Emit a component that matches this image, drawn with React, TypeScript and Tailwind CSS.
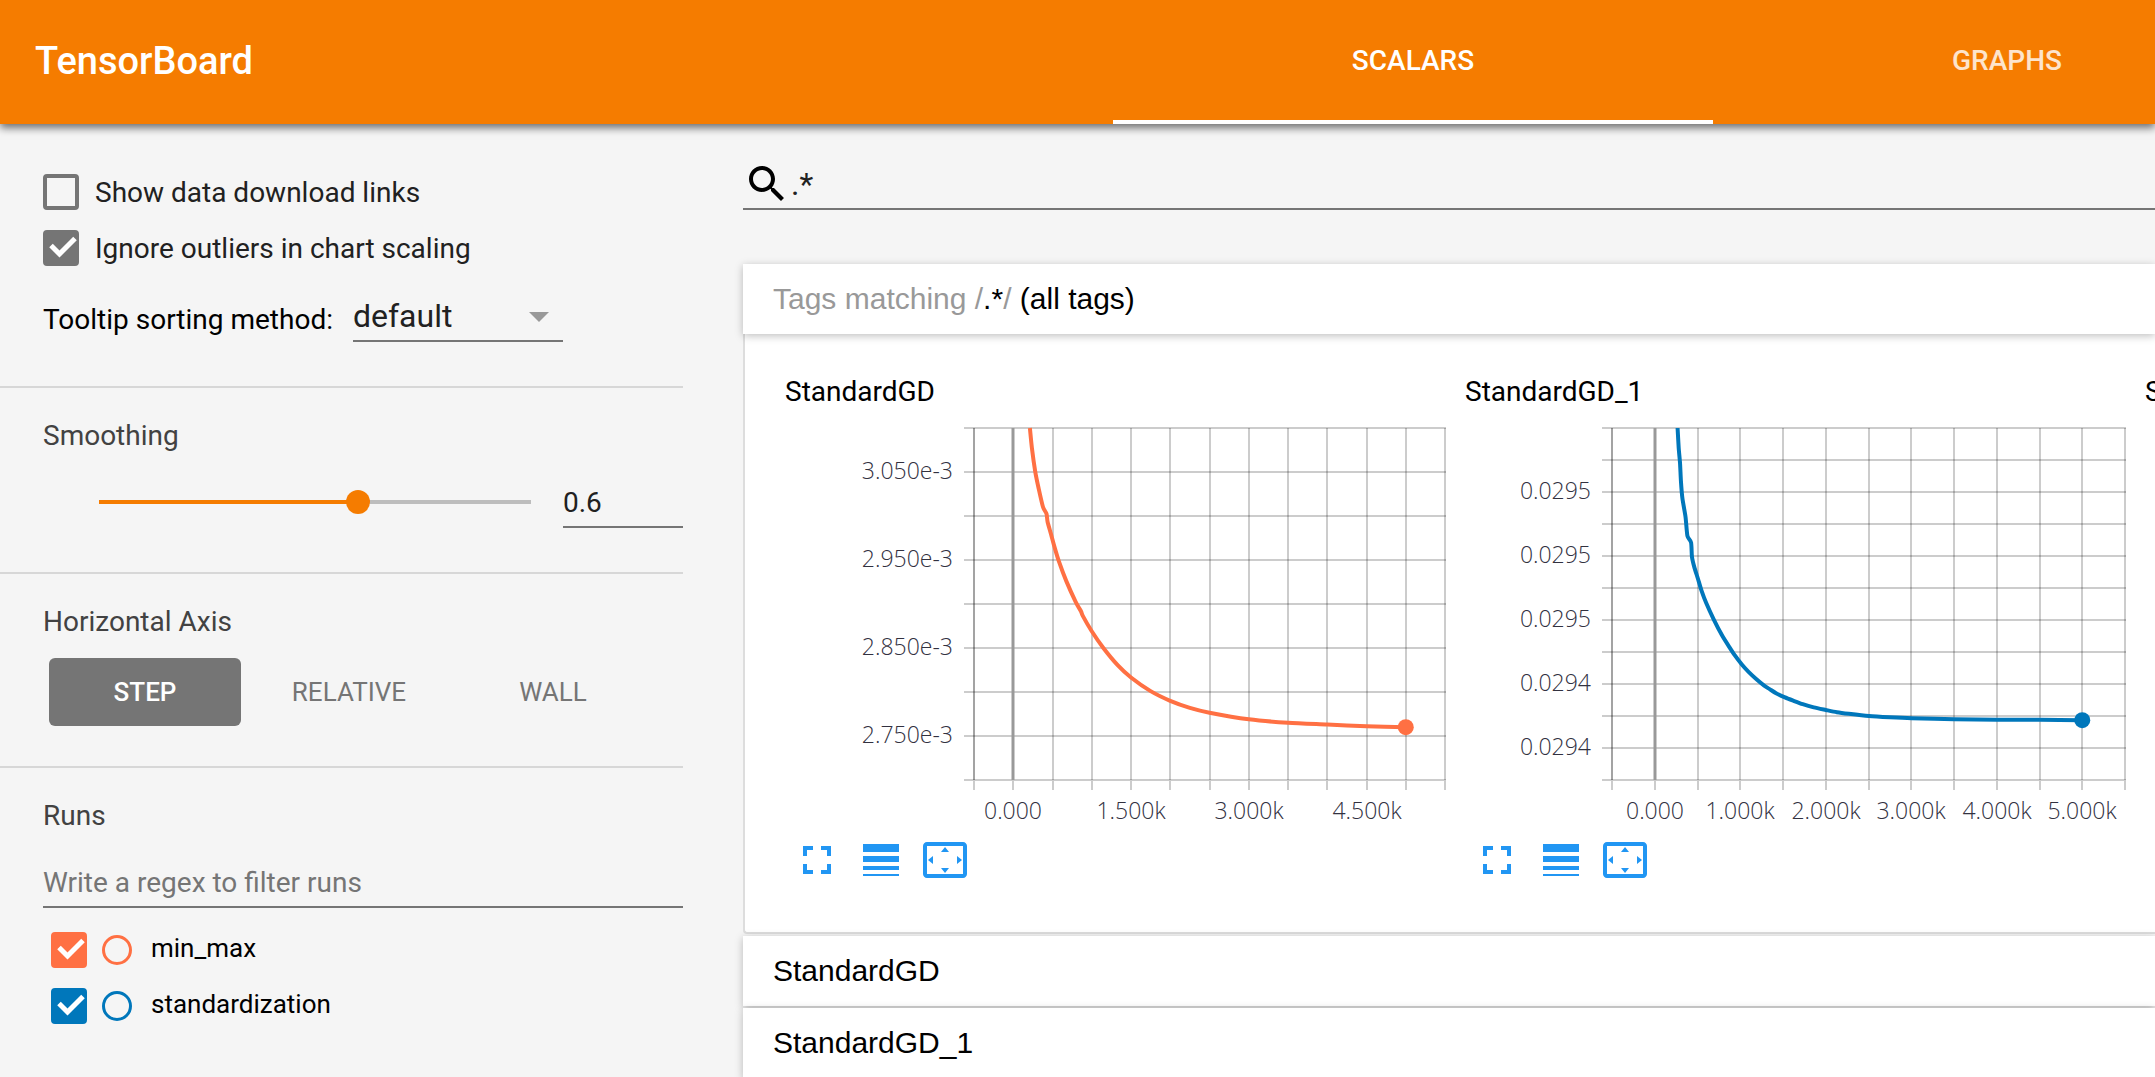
import React, { useId, useState } from "react";

type Point = [number, number];

type ChartSpec = {
  title: string;
  color: string;
  width: number;
  plotLeft: number;
  plotRight: number;
  rows: number;
  yLabels: { row: number; text: string }[];
  xLabels: { col: number; text: string }[];
  points: Point[];
};

const PLOT_TOP = 6;
const PLOT_HEIGHT = 352;
const COLUMNS = 12;

// Each point is [step, distance below the top edge in grid rows].
const minMaxPoints: Point[] = [
  [212, 0], [238, 0.46], [280, 0.99], [323, 1.37], [378, 1.79], [424, 1.95], [437, 2.13],
  [484, 2.43], [525, 2.7], [585, 3.05], [676, 3.48], [795, 3.95], [864, 4.17], [886, 4.27],
  [1000, 4.62], [1148, 5], [1330, 5.39], [1500, 5.67], [1750, 5.98], [2000, 6.2],
  [2250, 6.36], [2500, 6.47], [3000, 6.62], [3500, 6.7], [4000, 6.74], [4500, 6.78], [5000, 6.8],
];

const standardizationPoints: Point[] = [
  [267, 0], [280, 0.62], [296, 1.11], [306, 1.65], [323, 2.19], [360, 2.78], [382, 3.37],
  [425, 3.58], [435, 4.02], [462, 4.34], [505, 4.71], [548, 5.09], [602, 5.47], [688, 5.97],
  [785, 6.47], [871, 6.84], [935, 7.1], [1021, 7.4], [1097, 7.62], [1193, 7.86], [1280, 8.05],
  [1344, 8.16], [1419, 8.29], [1516, 8.41], [1620, 8.52], [1731, 8.63], [1860, 8.73], [2000, 8.81],
  [2130, 8.88], [2269, 8.93], [2505, 9], [2750, 9.04], [3005, 9.07], [3505, 9.1], [4005, 9.12],
  [4505, 9.12], [5000, 9.13],
];

const charts: ChartSpec[] = [
  {
    title: "StandardGD",
    color: "#ff7043",
    width: 680,
    plotLeft: 189,
    plotRight: 660,
    rows: 8,
    yLabels: [
      { row: 1, text: "3.050e-3" },
      { row: 3, text: "2.950e-3" },
      { row: 5, text: "2.850e-3" },
      { row: 7, text: "2.750e-3" },
    ],
    xLabels: [
      { col: 1, text: "0.000" },
      { col: 4, text: "1.500k" },
      { col: 7, text: "3.000k" },
      { col: 10, text: "4.500k" },
    ],
    points: minMaxPoints,
  },
  {
    title: "StandardGD_1",
    color: "#0077bb",
    width: 680,
    plotLeft: 147,
    plotRight: 660,
    rows: 11,
    yLabels: [
      { row: 2, text: "0.0295" },
      { row: 4, text: "0.0295" },
      { row: 6, text: "0.0295" },
      { row: 8, text: "0.0294" },
      { row: 10, text: "0.0294" },
    ],
    xLabels: [
      { col: 1, text: "0.000" },
      { col: 3, text: "1.000k" },
      { col: 5, text: "2.000k" },
      { col: 7, text: "3.000k" },
      { col: 9, text: "4.000k" },
      { col: 11, text: "5.000k" },
    ],
    points: standardizationPoints,
  },
];

function smoothPath(pts: Point[]) {
  let d = `M${pts[0][0]} ${pts[0][1]}`;
  for (let i = 0; i < pts.length - 1; i++) {
    const p0 = pts[Math.max(i - 1, 0)];
    const p1 = pts[i];
    const p2 = pts[i + 1];
    const p3 = pts[Math.min(i + 2, pts.length - 1)];
    d += `C${p1[0] + (p2[0] - p0[0]) / 8} ${p1[1] + (p2[1] - p0[1]) / 8} ${p2[0] - (p3[0] - p1[0]) / 8} ${p2[1] - (p3[1] - p1[1]) / 8} ${p2[0]} ${p2[1]}`;
  }
  return d;
}

function LineChart({ spec }: { spec: ChartSpec }) {
  const { plotLeft: left, plotRight: right, rows, color } = spec;
  const colW = (right - left) / COLUMNS;
  const rowH = PLOT_HEIGHT / rows;
  const bottom = PLOT_TOP + PLOT_HEIGHT;
  const x = (col: number) => Math.round(left + col * colW);
  const y = (row: number) => PLOT_TOP + row * rowH;
  const pts = spec.points.map(([s, r]): Point => [left + (s / 500 + 1) * colW, y(r)]);
  const last = pts[pts.length - 1];
  const cols = Array.from({ length: COLUMNS + 1 }, (_, i) => i);
  const lines = Array.from({ length: rows + 1 }, (_, i) => i);
  return (
    <svg width={spec.width} height={408} viewBox={`0 0 ${spec.width} 408`} role="img" aria-label={`${spec.title} chart`}>
      {lines.map((r) => (
        <line key={r} x1={left - 10} x2={right + 1} y1={y(r)} y2={y(r)} stroke="#cccccc" strokeWidth={2} />
      ))}
      {cols.map((c) => (
        <g key={c}>
          <line x1={x(c)} x2={x(c)} y1={PLOT_TOP} y2={bottom} stroke="#000" strokeOpacity={c === 0 ? 0.36 : 0.2} strokeWidth={2} />
          <line x1={x(c)} x2={x(c)} y1={bottom + 1} y2={bottom + 10} stroke="#cccccc" strokeWidth={2} />
        </g>
      ))}
      <line x1={x(1)} x2={x(1)} y1={PLOT_TOP} y2={bottom} stroke="#999999" strokeWidth={3} />
      <path d={smoothPath(pts)} fill="none" stroke={color} strokeWidth={4} strokeLinejoin="round" />
      <circle cx={last[0]} cy={last[1]} r={8} fill={color} />
      <g className="fill-[#32313f] font-['Open_Sans',sans-serif] text-[23px] font-light">
        {spec.yLabels.map((l) => (
          <text key={l.row} x={left - 21} y={y(l.row) + 7} textAnchor="end">
            {l.text}
          </text>
        ))}
        {spec.xLabels.map((l) => (
          <text key={l.col} x={x(l.col)} y={397} textAnchor="middle">
            {l.text}
          </text>
        ))}
      </g>
    </svg>
  );
}

const chartActions = [
  { label: "Toggle fullscreen", d: "M7 14H5v5h5v-2H7v-3zm-2-4h2V7h3V5H5v5zm12 7h-3v2h5v-5h-2v3zM14 5v2h3v3h2V5h-5z" },
  { label: "Toggle y-axis log scale", d: "M3 17h18v-2H3v2zm0 3h18v-1H3v1zm0-7h18v-3H3v3zm0-9v4h18V4H3z" },
  {
    label: "Fit domain to data",
    d: "M12.01 5.5L10 8h4l-1.99-2.5zM18 10v4l2.5-1.99L18 10zM6 10l-2.5 2.01L6 14v-4zm8 6h-4l2.01 2.5L14 16zm7-13H3c-1.1 0-2 .9-2 2v14c0 1.1.9 2 2 2h18c1.1 0 2-.9 2-2V5c0-1.1-.9-2-2-2zm0 16.01H3V4.99h18v14.02z",
  },
];

function ChartTitle({ children }: { children: React.ReactNode }) {
  return <h3 className="h-8 text-[28px] leading-8 text-black">{children}</h3>;
}

function ChartCard({ spec }: { spec: ChartSpec }) {
  return (
    <article className="w-[680px] shrink-0">
      <ChartTitle>{spec.title}</ChartTitle>
      <div className="mt-3.5">
        <LineChart spec={spec} />
      </div>
      <div className="mt-1.5 flex gap-4 pl-2 text-[#2196f3]">
        {chartActions.map((a) => (
          <button key={a.label} type="button" aria-label={a.label} className="size-12">
            <svg viewBox="0 0 24 24" className="size-12" fill="currentColor">
              <path d={a.d} />
            </svg>
          </button>
        ))}
      </div>
    </article>
  );
}

function Check({ initial = false, boxClass, id }: { initial?: boolean; boxClass: string; id: string }) {
  const [on, setOn] = useState(initial);
  return (
    <span className="relative block size-9 shrink-0">
      <input
        id={id}
        type="checkbox"
        checked={on}
        onChange={(e) => setOn(e.target.checked)}
        className={`block size-9 appearance-none rounded-sm border-4 ${boxClass}`}
      />
      {on && (
        <svg viewBox="0 0 36 36" className="pointer-events-none absolute inset-0 size-9" fill="none" stroke="#fff" strokeWidth={5}>
          <path d="M8 15.5L16.5 24L32 8.5" />
        </svg>
      )}
    </span>
  );
}

function OptionRow({ label, initial }: { label: string; initial?: boolean }) {
  const id = useId();
  return (
    <div className="flex items-center gap-4">
      <Check id={id} initial={initial} boxClass="border-[#757575] checked:bg-[#757575]" />
      <label htmlFor={id} className="pt-0.5 text-[28px] leading-9 text-[#212121]">
        {label}
      </label>
    </div>
  );
}

function RunRow({ name, boxClass, ringClass }: { name: string; boxClass: string; ringClass: string }) {
  const id = useId();
  return (
    <li className="flex items-center">
      <Check id={id} initial boxClass={boxClass} />
      <input type="radio" name="isolated-run" aria-label={`Show only ${name}`} className={`ml-[15px] size-[30px] appearance-none rounded-full border-3 ${ringClass}`} />
      <label htmlFor={id} className="-mt-1 ml-[19px] text-[26px] leading-9 text-black">
        {name}
      </label>
    </li>
  );
}

function Sidebar() {
  const [axis, setAxis] = useState("STEP");
  const [smoothing, setSmoothing] = useState("0.6");
  return (
    <aside className="w-[683px] shrink-0 divide-y-2 divide-[#d7d7d7]">
      <section className="h-[264px] pt-[49px] pl-[43px]">
        <div className="flex flex-col gap-[18px]">
          <OptionRow label="Show data download links" />
          <OptionRow label="Ignore outliers in chart scaling" initial />
        </div>
        <div className="mt-[25px] flex">
          <label htmlFor="sorting" className="pt-2.5 text-[28px] leading-9 text-black">
            Tooltip sorting method:
          </label>
          <div className="relative ml-5 w-[210px] border-b-2 border-[#757575]">
            <select id="sorting" className="block h-12 w-full appearance-none bg-transparent text-[32px] leading-[48px] text-[#212121]">
              <option>default</option>
              <option>ascending</option>
              <option>descending</option>
              <option>nearest</option>
            </select>
            <svg viewBox="0 0 20 10" className="pointer-events-none absolute top-5 right-3.5 h-2.5 w-5" fill="#999999">
              <path d="M0 0H20L10 10Z" />
            </svg>
          </div>
        </div>
      </section>

      <section className="h-[186px] pt-8 pl-[43px]">
        <h2 className="text-[28px] leading-8 text-[#424242]">
          <label htmlFor="smoothing">Smoothing</label>
        </h2>
        <div className="mt-6 flex items-center pl-11">
          <input
            id="smoothing"
            type="range"
            min="0"
            max="1"
            step="0.001"
            value={Number(smoothing) || 0}
            onChange={(e) => setSmoothing(e.target.value)}
            className="h-1 w-[456px] appearance-none bg-[linear-gradient(to_right,transparent_12px,#f57c00_12px,#f57c00_58%,#bdbdbd_58%,#bdbdbd_calc(100%-12px),transparent_calc(100%-12px))] [&::-webkit-slider-thumb]:size-6 [&::-webkit-slider-thumb]:appearance-none [&::-webkit-slider-thumb]:rounded-full [&::-webkit-slider-thumb]:bg-[#f57c00]"
          />
          <input
            aria-label="Smoothing value"
            value={smoothing}
            onChange={(e) => setSmoothing(e.target.value)}
            className="ml-5 h-[52px] w-[120px] border-b-2 border-[#757575] bg-transparent pt-0.5 text-[28px] leading-9 text-[#212121]"
          />
        </div>
      </section>

      <section className="h-[194px] pt-8 pl-[43px]">
        <h2 className="text-[28px] leading-8 text-[#424242]">Horizontal Axis</h2>
        <div className="mt-5 flex gap-3 pl-1.5">
          {["STEP", "RELATIVE", "WALL"].map((name) => (
            <button
              key={name}
              type="button"
              aria-pressed={axis === name}
              onClick={() => setAxis(name)}
              className="h-[68px] w-48 rounded-md text-[26px] text-[#757575] aria-pressed:bg-[#757575] aria-pressed:font-medium aria-pressed:text-white"
            >
              {name}
            </button>
          ))}
        </div>
      </section>

      <section className="pt-8 pl-[43px]">
        <h2 className="text-[28px] leading-8 text-[#424242]">Runs</h2>
        <input
          aria-label="Filter runs"
          placeholder="Write a regex to filter runs"
          className="mt-6 block h-[52px] w-full border-b-2 border-[#757575] bg-transparent pt-0.5 text-[28px] text-[#212121] placeholder:text-[#757575]"
        />
        <ul className="mt-6 flex flex-col gap-5 pl-2">
          <RunRow name="min_max" boxClass="border-[#ff7043] checked:bg-[#ff7043]" ringClass="border-[#ff7043]" />
          <RunRow name="standardization" boxClass="border-[#0077bb] checked:bg-[#0077bb]" ringClass="border-[#0077bb]" />
        </ul>
      </section>
    </aside>
  );
}

function PaneHeader({ children }: { children: React.ReactNode }) {
  return (
    <button
      type="button"
      className="relative block h-[70px] w-full bg-white pb-0.5 pl-[30px] text-left font-['Liberation_Sans',Arial,sans-serif] text-[30px] text-black shadow-[0_2px_8px_rgba(0,0,0,0.25)]"
    >
      {children}
    </button>
  );
}

export default function App() {
  const [filter, setFilter] = useState(".*");
  return (
    <div className="flex h-screen flex-col overflow-hidden bg-[#f5f5f5] font-['Roboto',sans-serif]">
      <header className="relative flex h-31 shrink-0 items-stretch bg-[#f57c00] text-white shadow-[0_4px_8px_rgba(0,0,0,0.55)]">
        <h1 className="flex flex-1 items-center pb-0.5 pl-[35px] text-[38px] font-medium">TensorBoard</h1>
        <nav className="flex text-[28px] font-medium">
          <button type="button" className="w-[600px] border-b-4 border-white pt-0.5">
            SCALARS
          </button>
          <button type="button" className="w-[442px] pb-0.5 pl-[146px] text-white/80">
            GRAPHS
          </button>
        </nav>
      </header>

      <div className="flex min-h-0 flex-1">
        <Sidebar />
        <main className="ml-[60px] flex min-w-0 flex-1 flex-col pt-[34px]">
          <div className="flex h-[52px] shrink-0 items-end border-b-2 border-[#757575]">
            <svg viewBox="0 0 24 24" className="size-12 shrink-0" fill="#000">
              <path d="M15.5 14h-.79l-.28-.27C15.41 12.59 16 11.11 16 9.5 16 5.91 13.09 3 9.5 3S3 5.91 3 9.5 5.91 16 9.5 16c1.61 0 3.09-.59 4.23-1.57l.27.28v.79l5 4.99L20.49 19l-4.99-5zm-6 0C7.01 14 5 11.99 5 9.5S7.01 5 9.5 5 14 7.01 14 9.5 11.99 14 9.5 14z" />
            </svg>
            <input
              aria-label="Filter tags"
              value={filter}
              onChange={(e) => setFilter(e.target.value)}
              className="h-12 min-w-0 flex-1 bg-transparent text-[32px] text-[#212121]"
            />
          </div>

          <div className="mt-[54px] flex shrink-0 flex-col">
            <PaneHeader>
              <span className="text-[#999999]">Tags matching /</span>.*<span className="text-[#999999]">/</span> (all tags)
            </PaneHeader>
            <div className="flex h-[600px] overflow-hidden rounded-bl border-b-2 border-l-2 border-[#dddddd] bg-white pt-[42px] pl-10">
              {charts.map((c) => (
                <ChartCard key={c.title} spec={c} />
              ))}
              <ChartTitle>StandardGD_2</ChartTitle>
            </div>
            <div className="mt-0.5 flex flex-col gap-0.5">
              <PaneHeader>StandardGD</PaneHeader>
              <PaneHeader>StandardGD_1</PaneHeader>
            </div>
          </div>
        </main>
      </div>
    </div>
  );
}
